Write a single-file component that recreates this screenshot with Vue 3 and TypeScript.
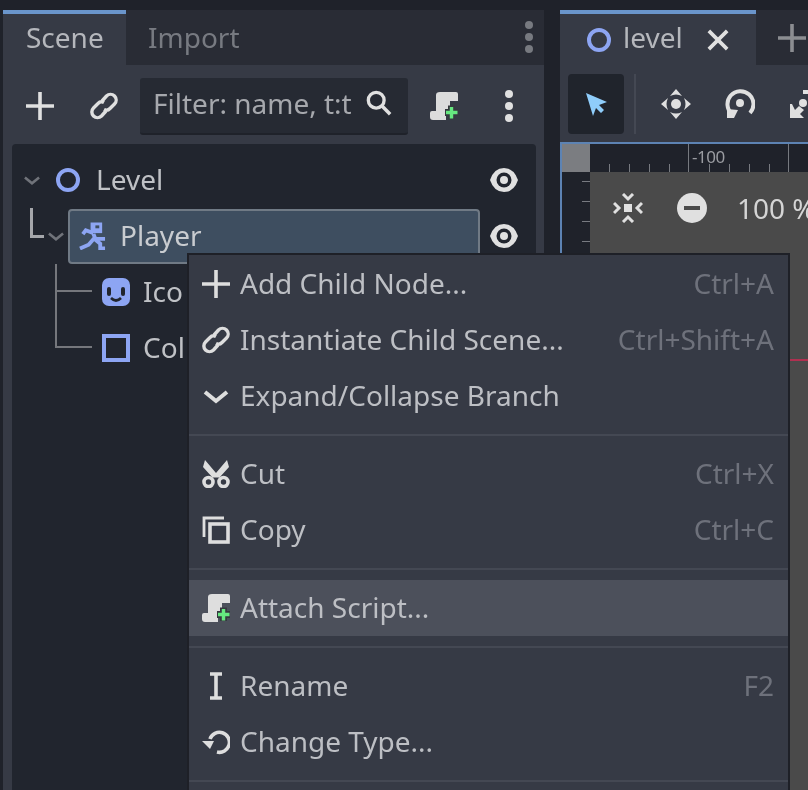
<script setup lang="ts">
type MenuRow = { label?: string; icon?: string; keys?: string; hover?: boolean; sep?: boolean };

const menu: MenuRow[] = [
  { label: 'Add Child Node...', icon: 'i-plus', keys: 'Ctrl+A' },
  { label: 'Instantiate Child Scene...', icon: 'i-link', keys: 'Ctrl+Shift+A' },
  { label: 'Expand/Collapse Branch', icon: 'i-chevron' },
  { sep: true },
  { label: 'Cut', icon: 'i-cut', keys: 'Ctrl+X' },
  { label: 'Copy', icon: 'i-copy', keys: 'Ctrl+C' },
  { sep: true },
  { label: 'Attach Script...', icon: 'i-script', hover: true },
  { sep: true },
  { label: 'Rename', icon: 'i-rename', keys: 'F2' },
  { label: 'Change Type...', icon: 'i-change' },
  { sep: true }
];

const hTicks = [609, 629, 649, 669, 709, 729, 749, 769];
const vTicks = [181, 201, 221, 241];
</script>

<template>
  <svg class="defs" width="0" height="0">
    <defs>
      <symbol id="i-plus" viewBox="0 0 28 28">
        <path d="M14 0V28M0 14H28" fill="none" stroke="currentColor" stroke-width="3.6" />
      </symbol>
      <symbol id="i-link" viewBox="0 0 28 28">
        <path d="M12 9l4.500-5a5.500 5.500 0 0 1 8 8l-4.500 4.500a5 5 0 0 1-6 1" fill="none" stroke="currentColor" stroke-width="3.400" />
        <path d="M16 19l-4.500 5a5.500 5.500 0 0 1-8-8l4.500-4.500a5 5 0 0 1 6-1" fill="none" stroke="currentColor" stroke-width="3.400" />
      </symbol>
      <symbol id="i-chevron" viewBox="0 0 28 28">
        <path d="M3 10l11 9 11-9" fill="none" stroke="currentColor" stroke-width="4" />
      </symbol>
      <symbol id="i-cut" viewBox="0 0 28 28">
        <path d="M3 0L14 13L25 0L27 7L17.500 17.500H10.500L1 7Z" fill="currentColor" />
        <circle cx="6.500" cy="22" r="4.500" fill="none" stroke="currentColor" stroke-width="3.600" />
        <circle cx="21.500" cy="22" r="4.500" fill="none" stroke="currentColor" stroke-width="3.600" />
      </symbol>
      <symbol id="i-copy" viewBox="0 0 28 28">
        <path d="M2 21V2H22" fill="none" stroke="currentColor" stroke-width="2.800" />
        <rect x="8" y="8" width="18" height="18" fill="none" stroke="currentColor" stroke-width="3.600" />
      </symbol>
      <symbol id="i-script" viewBox="0 0 28 28">
        <path d="M10 0H26Q28 0 28 2V9H20V20H16V28H3Q0 28 0 25V21Q0 19 2 19H6V3Q6 0 10 0Z" fill="currentColor" />
        <path d="M21.500 13.500V27M15 20.500H28" fill="none" stroke="#36393f" stroke-width="7" />
        <path d="M21.500 15V26.500M16 20.500H27.500" fill="none" stroke="#66e880" stroke-width="3.400" />
      </symbol>
      <symbol id="i-rename" viewBox="0 0 28 28">
        <path d="M8 2H20M8 26H20M14 2V26" fill="none" stroke="currentColor" stroke-width="3.600" />
      </symbol>
      <symbol id="i-change" viewBox="0 0 28 28">
        <path d="M8 11A10 10 0 1 1 15 24" fill="none" stroke="currentColor" stroke-width="3.600" />
        <path d="M0 13H12L8 21Z" fill="currentColor" />
      </symbol>
      <symbol id="i-eye" viewBox="0 0 28 28">
        <path d="M0 14Q4 2 14 2Q24 2 28 14Q24 26 14 26Q4 26 0 14Z" fill="currentColor" />
        <circle cx="14" cy="14" r="7.500" fill="#21252e" />
        <circle cx="14" cy="14" r="4" fill="currentColor" />
      </symbol>
    </defs>
  </svg>

  <div class="page">
    <section class="dock">
      <div class="tabs">
        <div class="tab active">Scene</div>
        <div class="tab">Import</div>
        <div class="dots dim"><i></i><i></i><i></i></div>
      </div>

      <div class="toolbar">
        <svg class="icon"><use href="#i-plus" /></svg>
        <svg class="icon link"><use href="#i-link" /></svg>
        <div class="filter">
          <span>Filter: name, t:t</span>
          <svg class="search" viewBox="0 0 28 28">
            <circle cx="11" cy="11" r="8.500" fill="none" stroke="currentColor" stroke-width="3.600" />
            <path d="M17 17l9 9" fill="none" stroke="currentColor" stroke-width="3.800" />
          </svg>
        </div>
        <svg class="icon script"><use href="#i-script" /></svg>
        <div class="dots"><i></i><i></i><i></i></div>
      </div>

      <div class="tree">
        <div class="node level">
          <svg class="fold"><use href="#i-chevron" /></svg>
          <span class="ring"></span>
          <span class="name">Level</span>
          <svg class="eye"><use href="#i-eye" /></svg>
        </div>
        <div class="node player">
          <span class="elbow"></span>
          <svg class="fold sub"><use href="#i-chevron" /></svg>
          <div class="selected">
            <svg class="runner" viewBox="0 0 28 28">
              <path d="M12 0H24V11H12Z" fill="currentColor" />
              <rect x="17" y="3" width="4" height="3" fill="#3e4e60" />
              <g fill="none" stroke="currentColor" stroke-width="4">
                <path d="M15 11L7 8L4 12M15 12L17 17H27M16 16L10 23L1 27M17 18L22 22V27H27" />
              </g>
            </svg>
            <span class="name">Player</span>
          </div>
          <svg class="eye"><use href="#i-eye" /></svg>
        </div>
        <div class="node child">
          <span class="branch long"></span>
          <svg class="face" viewBox="0 0 28 28">
            <rect width="28" height="28" rx="7" fill="#8da5f3" />
            <rect x="5" y="9" width="4" height="9" rx="2" fill="#21252e" />
            <rect x="19" y="9" width="4" height="9" rx="2" fill="#21252e" />
            <path d="M9 20Q14 25 19 20" fill="none" stroke="#21252e" stroke-width="2.600" />
          </svg>
          <span class="name">Ico</span>
        </div>
        <div class="node child">
          <span class="branch"></span>
          <span class="square"></span>
          <span class="name">Col</span>
        </div>
      </div>
    </section>

    <section class="editor">
      <div class="tabs">
        <div class="tab active level-tab">
          <span class="ring"></span>
          <span class="tab-name">level</span>
          <svg class="close" viewBox="0 0 24 24">
            <path d="M2 2L22 22M22 2L2 22" fill="none" stroke="currentColor" stroke-width="4" />
          </svg>
        </div>
        <svg class="icon add"><use href="#i-plus" /></svg>
      </div>

      <div class="tools">
        <div class="select-btn">
          <svg viewBox="0 0 24 24" width="24" height="24">
            <path d="M2 1L23 10L15 13L20 18L17 21L12 16L9 24Z" fill="#8fcdfb" />
          </svg>
        </div>
        <span class="vsep"></span>
        <svg class="tool" viewBox="0 0 30 30">
          <circle cx="15" cy="15" r="5" fill="currentColor" />
          <path d="M15 0L21 7Q15 4 9 7ZM15 30L21 23Q15 26 9 23ZM0 15L7 9Q4 15 7 21ZM30 15L23 9Q26 15 23 21Z" fill="currentColor" />
        </svg>
        <svg class="tool" viewBox="0 0 30 30">
          <path d="M7 25A13 13 0 1 1 25 24" fill="none" stroke="currentColor" stroke-width="4" />
          <circle cx="15" cy="14" r="4" fill="currentColor" />
          <path d="M2 20L13 21L9 29H2Z" fill="currentColor" />
        </svg>
        <svg class="tool" viewBox="0 0 30 30">
          <circle cx="14" cy="14" r="4" fill="currentColor" />
          <path d="M1 15V29H15L11 25L15 21L10 17L6 21L3 15Z" fill="currentColor" />
          <path d="M14 1H29V5H14Z" fill="currentColor" />
        </svg>
      </div>

      <div class="viewport">
        <div class="ruler-top">
          <span class="corner"></span>
          <span class="major" style="left: 126px"></span>
          <span class="major" style="left: 226px"></span>
          <span class="minus100">-100</span>
          <span v-for="x in hTicks" :key="x" class="tick" :style="{ left: x - 562 + 'px' }"></span>
        </div>
        <div class="canvas-row">
          <div class="ruler-left">
            <span v-for="y in vTicks" :key="y" class="vtick" :style="{ top: y - 172 + 'px' }"></span>
          </div>
          <div class="canvas">
            <svg class="fit" viewBox="0 0 30 30">
              <rect x="11" y="11" width="8" height="8" fill="currentColor" />
              <path d="M10 1L15 6L20 1M10 29L15 24L20 29M1 10L6 15L1 20M29 10L24 15L29 20" fill="none" stroke="currentColor" stroke-width="3" />
            </svg>
            <span class="minus"><i></i></span>
            <span class="zoom-text">100 %</span>
            <span class="red-axis"></span>
          </div>
        </div>
      </div>
    </section>
  </div>

  <div class="menu">
    <template v-for="(row, i) in menu" :key="i">
      <div v-if="row.sep" class="menu-sep"></div>
      <div v-else :class="['menu-item', { hover: row.hover }]">
        <svg class="menu-icon"><use :href="'#' + row.icon" /></svg>
        <span class="label">{{ row.label }}</span>
        <span class="keys">{{ row.keys }}</span>
      </div>
    </template>
  </div>
</template>

<style>
html,
body {
  margin: 0;
  background: #20232b;
  overflow: hidden;
}
</style>

<style scoped>
.defs {
  position: absolute;
}

.page {
  display: flex;
  height: 790px;
  width: 808px;
  padding-top: 10px;
  box-sizing: border-box;
  overflow: hidden;
  background: #1f222a;
  font-family: 'Noto Sans', sans-serif;
  font-size: 28px;
  color: #bfc1c5;
  filter: blur(0.6px);
}

.dock {
  width: 541px;
  margin-left: 3px;
  background: #363a45;
  flex-shrink: 0;
}

.editor {
  width: 248px;
  margin-left: 16px;
  background: #363a45;
  flex-shrink: 0;
}

.tabs {
  position: relative;
  display: flex;
  align-items: center;
  height: 55px;
  background: #292c35;
}

.tab {
  height: 55px;
  box-sizing: border-box;
  padding: 3px 22px 0;
  line-height: 48px;
  color: #777a81;
}

.tab.active {
  width: 123px;
  background: #363a45;
  border-top: 4px solid #6a95cb;
  padding: 0 0 0 23px;
  line-height: 46px;
  color: #b5b7bc;
}

.dots {
  display: flex;
  flex-direction: column;
  gap: 4px;
  margin-left: auto;
}

.dots i {
  width: 8px;
  height: 8px;
  border-radius: 50%;
  background: #e0e0e0;
}

.dots.dim {
  margin-right: 11px;
  margin-top: -2px;
}

.dots.dim i {
  background: #777a80;
}

.toolbar {
  display: flex;
  align-items: center;
  height: 79px;
  padding: 3px 31px 0 23px;
  box-sizing: border-box;
}

.icon {
  width: 28px;
  height: 28px;
  color: #e0e0e0;
  flex-shrink: 0;
}

.link {
  margin-left: 36px;
}

.filter {
  display: flex;
  align-items: center;
  justify-content: space-between;
  width: 268px;
  height: 57px;
  box-sizing: border-box;
  margin-left: 22px;
  padding: 0 16px 4px 13px;
  background: #262a33;
  border-bottom: 2px solid #1f222a;
  border-radius: 3px;
  color: #a6a8ad;
  white-space: nowrap;
}

.search {
  width: 26px;
  height: 26px;
  color: #e0e0e0;
}

.script {
  margin-left: 22px;
  color: #dcdcdc;
}

.toolbar .dots {
  margin-left: auto;
}

.tree {
  margin: 0 8px 0 9px;
  height: 646px;
  padding-top: 8px;
  box-sizing: border-box;
  background: #21252e;
  border-radius: 4px 4px 0 0;
}

.node {
  position: relative;
  display: flex;
  align-items: center;
  height: 56px;
}

.name {
  line-height: 1;
  margin-top: -2px;
}

.fold {
  width: 18px;
  height: 18px;
  color: #70737a;
}

.level .fold {
  margin-left: 11px;
}

.ring {
  display: inline-block;
  width: 16px;
  height: 16px;
  border: 4px solid #8da5f3;
  border-radius: 50%;
  flex-shrink: 0;
}

.level .ring {
  margin-left: 15px;
}

.level .name {
  margin-left: 16px;
}

.eye {
  position: absolute;
  left: 478px;
  top: 14px;
  width: 28px;
  height: 28px;
  color: #e0e0e0;
}

.elbow {
  position: absolute;
  left: 18px;
  top: 0;
  width: 14px;
  height: 30px;
  border-left: 3px solid #a5a7ab;
  border-bottom: 3px solid #a5a7ab;
  box-sizing: border-box;
}

.sub {
  margin-left: 35px;
}

.selected {
  display: flex;
  align-items: center;
  width: 412px;
  height: 55px;
  box-sizing: border-box;
  padding-left: 9px;
  margin-left: 3px;
  background: #3e4e60;
  border: 2px solid #707a85;
  border-radius: 4px;
  color: #c9ccd0;
}

.runner {
  width: 27px;
  height: 28px;
  color: #8da5f3;
  flex-shrink: 0;
}

.selected .name {
  margin-left: 14px;
}

.child {
  padding-left: 90px;
}

.branch {
  position: absolute;
  left: 43px;
  bottom: 28px;
  width: 37px;
  height: 28px;
  border-left: 2px solid #75777c;
  border-bottom: 2px solid #75777c;
  box-sizing: border-box;
}

.branch:not(.long) {
  height: 56px;
}

.face {
  width: 28px;
  height: 28px;
  flex-shrink: 0;
}

.square {
  width: 28px;
  height: 28px;
  box-sizing: border-box;
  border: 4px solid #8da5f3;
  flex-shrink: 0;
}

.child .name {
  margin-left: 13px;
}

.tab.level-tab {
  display: flex;
  align-items: center;
  width: 196px;
  flex-shrink: 0;
  padding: 0 0 4px 27px;
  line-height: 1;
}

.level-tab .ring {
  margin-right: 12px;
  margin-top: 4px;
}

.tab-name {
  margin-top: -2px;
}

.close {
  width: 22px;
  height: 22px;
  margin-left: 24px;
  margin-top: 4px;
  color: #e0e0e0;
}

.add {
  margin-left: 22px;
  color: #8b8d91;
}

.tools {
  display: flex;
  align-items: center;
  height: 77px;
  padding-left: 8px;
  color: #e0e0e0;
}

.select-btn {
  display: flex;
  align-items: center;
  justify-content: center;
  width: 56px;
  height: 60px;
  flex-shrink: 0;
  background: #20242c;
  border-radius: 4px;
}

.vsep {
  width: 2px;
  height: 60px;
  margin: 0 25px 0 10px;
  background: #444853;
  flex-shrink: 0;
}

.tool {
  width: 30px;
  height: 30px;
  margin-right: 34px;
  flex-shrink: 0;
}

.viewport {
  height: 648px;
  background: #4a4a4a;
  border-top: 2px solid #5d83b3;
  border-left: 2px solid #5d83b3;
  box-sizing: border-box;
}

.ruler-top {
  position: relative;
  height: 28px;
  background: #1f222a;
}

.corner {
  position: absolute;
  left: 0;
  top: 0;
  width: 28px;
  height: 28px;
  background: #7b7d81;
}

.major {
  position: absolute;
  top: 0;
  width: 1px;
  height: 28px;
  background: #777a80;
}

.tick {
  position: absolute;
  bottom: 0;
  width: 1px;
  height: 8px;
  background: #777a80;
}

.minus100 {
  position: absolute;
  left: 130px;
  top: 4px;
  font-size: 17px;
  line-height: 1;
  color: #9a9ca1;
  letter-spacing: -0.5px;
}

.canvas-row {
  display: flex;
  height: 618px;
}

.ruler-left {
  position: relative;
  width: 28px;
  background: #1f222a;
  flex-shrink: 0;
}

.vtick {
  position: absolute;
  right: 0;
  width: 8px;
  height: 1px;
  background: #777a80;
}

.canvas {
  position: relative;
  flex: 1;
  display: flex;
  align-items: flex-start;
  padding: 21px 0 0 23px;
  color: #e0e0e0;
  white-space: nowrap;
  overflow: hidden;
}

.fit {
  width: 30px;
  height: 30px;
  flex-shrink: 0;
}

.minus {
  display: flex;
  align-items: center;
  justify-content: center;
  width: 30px;
  height: 30px;
  margin-left: 34px;
  background: #e0e0e0;
  border-radius: 50%;
  flex-shrink: 0;
}

.minus i {
  width: 16px;
  height: 4px;
  background: #4a4a4a;
}

.zoom-text {
  margin-left: 30px;
  line-height: 30px;
  color: #d5d5d5;
}

.red-axis {
  position: absolute;
  right: 0;
  top: 187px;
  width: 30px;
  height: 2px;
  background: #b03050;
}

.menu {
  position: absolute;
  left: 187px;
  top: 253px;
  width: 603px;
  height: 540px;
  box-sizing: border-box;
  padding-top: 1px;
  background: #363a45;
  border: 2px solid #1e2027;
  font-family: 'Noto Sans', sans-serif;
  font-size: 28px;
  color: #bdbfc4;
  filter: blur(0.6px);
}

.menu-item {
  display: flex;
  align-items: center;
  height: 56px;
  padding: 0 14px 0 13px;
}

.menu-item.hover {
  background: #4c505b;
}

.menu-icon {
  width: 28px;
  height: 28px;
  margin-right: 10px;
  color: #dedede;
  flex-shrink: 0;
}

.label {
  flex: 1;
  white-space: nowrap;
  margin-top: -2px;
}

.keys {
  color: #6e717b;
  margin-top: -2px;
}

.menu-sep {
  height: 22px;
  position: relative;
}

.menu-sep::after {
  content: '';
  position: absolute;
  left: 0;
  right: 0;
  top: 10px;
  height: 2px;
  background: #444853;
}
</style>
